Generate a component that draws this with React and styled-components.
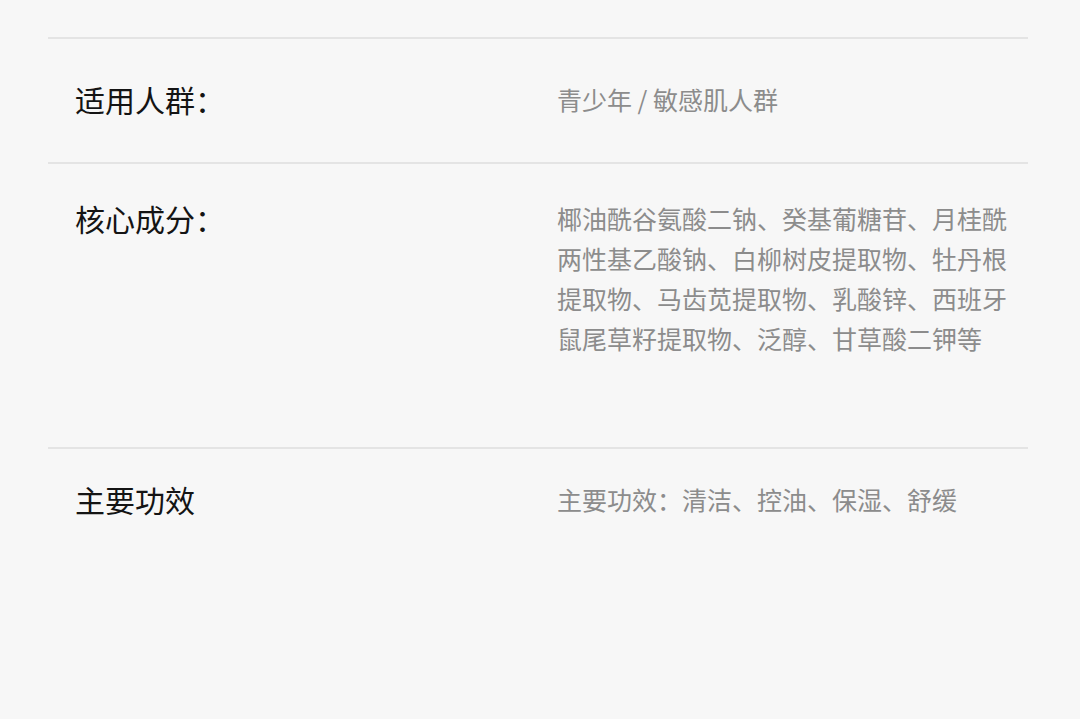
import styled, { createGlobalStyle } from 'styled-components';

const GlobalStyle = createGlobalStyle`
	html, body {
		margin: 0;
		padding: 0;
		background: #f7f7f7;
	}
	body {
		font-family: "Noto Sans CJK SC", "Noto Sans", sans-serif;
	}
`;

const Page = styled.div`
	width: 1080px;
	height: 719px;
	overflow: hidden;
	background: #f7f7f7;
	padding: 37px 52px 0 48px;
	box-sizing: border-box;
`;

const Row = styled.div`
	display: flex;
	align-items: flex-start;
	border-top: 2px solid #e4e4e4;
	height: ${(p) => p.$height}px;
	padding-top: ${(p) => p.$top}px;
	box-sizing: border-box;
`;

const Label = styled.div`
	width: 482px;
	padding-left: 27px;
	font-size: 30px;
	line-height: 40px;
	color: #141414;
	flex-shrink: 0;
`;

const Value = styled.div`
	width: 462px;
	font-size: 25px;
	line-height: 40px;
	color: #8c8c8c;
`;

const rows = [
	{ label: '适用人群：', value: '青少年 / 敏感肌人群', height: 125, top: 40 },
	{
		label: '核心成分：',
		value: '椰油酰谷氨酸二钠、癸基葡糖苷、月桂酰两性基乙酸钠、白柳树皮提取物、牡丹根提取物、马齿苋提取物、乳酸锌、西班牙鼠尾草籽提取物、泛醇、甘草酸二钾等',
		height: 285,
		top: 34,
	},
	{ label: '主要功效', value: '主要功效：清洁、控油、保湿、舒缓', height: 300, top: 30 },
];

const App = () => {
	return (
		<>
			<GlobalStyle />
			<Page lang="zh-CN">
				{rows.map(({ label, value, height, top }) => (
					<Row key={label} $height={height} $top={top}>
						<Label>{label}</Label>
						<Value>{value}</Value>
					</Row>
				))}
			</Page>
		</>
	);
};

export default App;
